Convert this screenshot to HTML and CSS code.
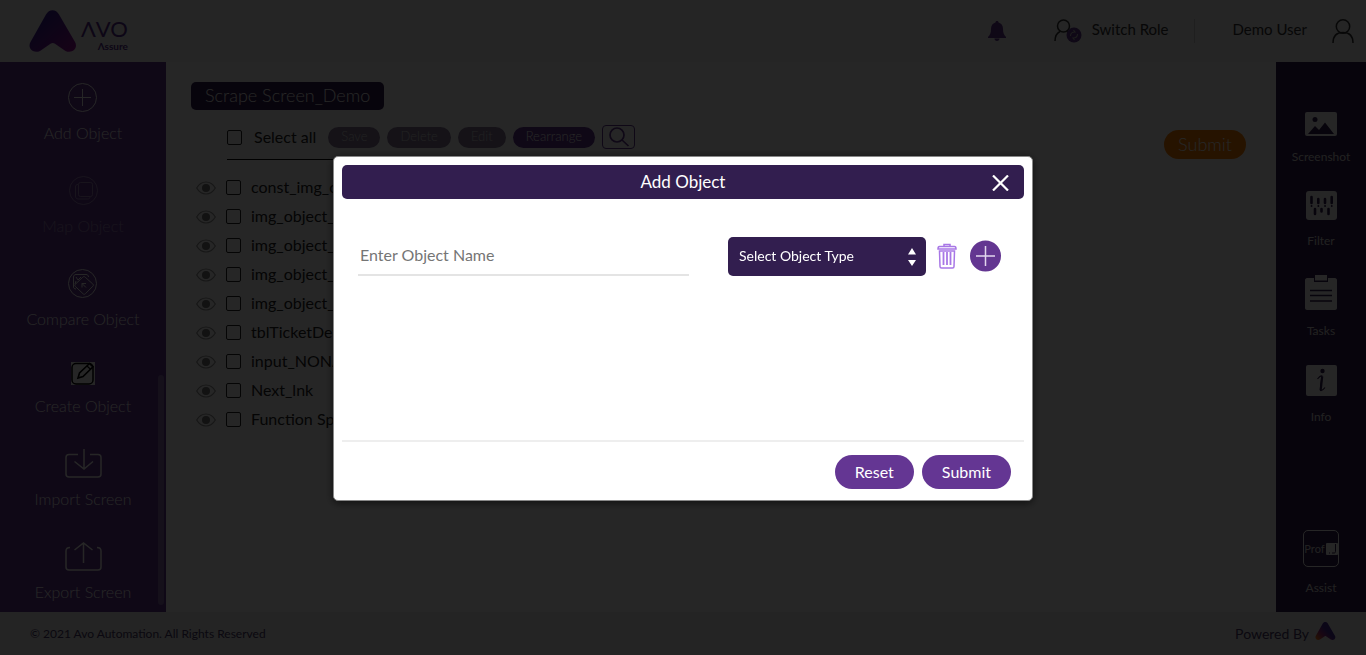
FILE: index.html
```html
<!DOCTYPE html>
<html lang="en">
<head>
  <meta charset="UTF-8">
  <meta name="viewport" content="width=device-width, initial-scale=1.0">
  <title>Avo Assure</title>
  <link rel="stylesheet" href="styles.css">
</head>
<body>
  <svg width="0" height="0" class="defs" aria-hidden="true">
    <defs>
      <linearGradient id="logoGrad" x1="0" y1="0" x2="1" y2="1">
        <stop offset="0.3" stop-color="#40209c"/>
        <stop offset="1" stop-color="#a0109c"/>
      </linearGradient>
      <linearGradient id="footGrad" x1="0" y1="1" x2="0.6" y2="0.5">
        <stop offset="0.1" stop-color="#ff7a18"/>
        <stop offset="0.6" stop-color="#a02880"/>
        <stop offset="1" stop-color="#4a2a9c"/>
      </linearGradient>
      <symbol id="eye" viewBox="0 0 20 14">
        <path d="M.7 7C3 3 6.300 1 10 1s7 2 9.300 6c-2.300 4-5.600 6-9.300 6S3 11 .7 7z" fill="none" stroke="#999" stroke-width="1.200"/>
        <circle cx="10" cy="7" r="4" fill="#777"/>
      </symbol>
    </defs>
  </svg>

  <div class="page">
    <header class="header">
      <a href="#" class="logo" aria-label="Avo Assure">
        <svg width="48" height="42" viewBox="0 0 48 42"><path d="M17 4.500C20 -1.300 27 -1.300 30 4.500L46 32c3.500 6.500-3 12-9.500 9L26 33.700c-1.500-1-3-1-4.500 0L11 41C4.500 44-2 38.500 1.500 32z" fill="url(#logoGrad)"/></svg>
        <span class="logo-text"><span class="logo-avo">ΛVO</span><span class="logo-sub">Λssure</span></span>
      </a>
      <div class="header-right">
        <button class="icon-btn bell" aria-label="Notifications">
          <svg width="18" height="20" viewBox="0 0 18 20"><path d="M9 0c1 0 1.500.6 1.500 1.500C13.500 2.300 15 4.700 15 8c0 4 1 6 3 8v1H0v-1c2-2 3-4 3-8 0-3.300 1.500-5.700 4.500-6.500C7.500.6 8 0 9 0zM6.500 17.500h5C11.500 19 10.400 20 9 20s-2.500-1-2.500-2.500z" fill="#633691"/></svg>
        </button>
        <button class="switch">
          <svg width="28" height="24" viewBox="0 0 28 24">
            <circle cx="9.500" cy="7" r="6" fill="none" stroke="#333" stroke-width="1.500"/>
            <path d="M1 22c0-5 2-8 5-9.500M13 12.300l2 1.500" fill="none" stroke="#333" stroke-width="1.500"/>
            <circle cx="20" cy="16" r="7.500" fill="#633691"/>
            <path d="M16.500 17c0-3 2-4 4.500-4l-1.500-2M23.500 15c0 3-2 4-4.500 4l1.500 2" fill="none" stroke="#bbb" stroke-width="1.100"/>
          </svg>
          <span>Switch Role</span>
        </button>
        <button class="user">
          <span>Demo User</span>
          <svg width="22" height="24" viewBox="0 0 22 24"><circle cx="11" cy="7.500" r="6.700" fill="none" stroke="#333" stroke-width="1.500"/><path d="M1 24c0-7 4-10.500 10-10.500S21 17 21 24" fill="none" stroke="#333" stroke-width="1.500"/></svg>
        </button>
      </div>
    </header>

    <div class="content">
      <nav class="sidebar">
        <button class="side-item">
          <svg width="29" height="29" viewBox="0 0 29 29" fill="none" stroke="#fff"><circle cx="14.500" cy="14.500" r="14"/><path d="M14.500 6v17M6 14.500h17"/></svg>
          Add Object
        </button>
        <button class="side-item" disabled>
          <svg width="29" height="29" viewBox="0 0 29 29" fill="none" stroke="#fff"><circle cx="14.500" cy="14.500" r="14"/><rect x="9.500" y="6.500" width="14" height="14" rx="2"/><path d="M9 8.500c-2 0-2.500 1-2.500 2.500v9c0 2 1 3 3 3h9c1.500 0 2.500-.5 2.500-2.500"/></svg>
          Map Object
        </button>
        <button class="side-item">
          <svg width="29" height="29" viewBox="0 0 29 29" fill="none" stroke="#fff"><circle cx="14.500" cy="14.500" r="14"/><path d="M8 20c-1.500 0-2.500-.7-2.500-2V8c0-1.500 1-2.500 2.500-2.500h10c1.500 0 2.500 1 2.500 2.500"/><path d="M14.800 8.200c.8-.8 1.600-.8 2.400 0l7.600 6.800c.8.800.8 1.500 0 2.300l-7.400 7.400c-.8.800-1.600.8-2.400 0l-7.600-7.200c-.8-.8-.8-1.500 0-2.300zM18 18.500l-4-4m0 4v-4h4M8 8l2 3 3-3M8 12l-1 3"/></svg>
          Compare Object
        </button>
        <button class="side-item">
          <svg width="24" height="23" viewBox="0 0 24 23"><path d="M0 0h24v23H0z" fill="#fff"/><rect x="1" y="1.500" width="21" height="20.500" rx="4" fill="none" stroke="#000" stroke-width="1.500"/><path d="M7 16l1.500-5L18.500 1.500l3.500 3.300L12 14.500z" fill="#fff" stroke="#000" stroke-width="1.600"/><path d="M16 4l3.500 3.300" stroke="#000" stroke-width="1.200"/></svg>
          Create Object
        </button>
        <button class="side-item">
          <svg width="37" height="29" viewBox="0 0 37 29" fill="none" stroke="#fff" stroke-width="1.500"><path d="M13 5.500H4c-2 0-3 1-3 3V25c0 2 1 3 3 3h29c2 0 3-1 3-3V8.500c0-2-1-3-3-3h-8M19 0v20M9.500 12.500L19 20l9-7.500"/></svg>
          Import Screen
        </button>
        <button class="side-item">
          <svg width="37" height="29" viewBox="0 0 37 29" fill="none" stroke="#fff" stroke-width="1.500"><path d="M5 5.500C2 5.500 1 7 1 9v16c0 2 1 3 3 3h29c2 0 3-1 3-3V9c0-2-1-3.500-4-3.500M18.500 21V1M9.500 8l9-7 9 7"/></svg>
          Export Screen
        </button>
        <div class="scroll-thumb"></div>
      </nav>

      <main class="main">
        <div class="scrape">
          <h1 class="screen-name">Scrape Screen_Demo</h1>
          <div class="toolbar">
            <input type="checkbox" id="selectAll">
            <label for="selectAll">Select all</label>
            <button class="pill" disabled>Save</button>
            <button class="pill" disabled>Delete</button>
            <button class="pill" disabled>Edit</button>
            <button class="pill">Rearrange</button>
            <button class="search-btn" aria-label="Search"><svg width="22" height="20" viewBox="0 0 22 20" fill="none" stroke="#633691" stroke-width="1.700"><circle cx="9" cy="8" r="7"/><path d="M14 13l6.500 6"/></svg></button>
          </div>
          <ul class="objects">
            <li><svg width="20" height="14"><use href="#eye"/></svg><input type="checkbox" id="o1"><label for="o1">const_img_object</label></li>
            <li><svg width="20" height="14"><use href="#eye"/></svg><input type="checkbox" id="o2"><label for="o2">img_object_img</label></li>
            <li><svg width="20" height="14"><use href="#eye"/></svg><input type="checkbox" id="o3"><label for="o3">img_object_img</label></li>
            <li><svg width="20" height="14"><use href="#eye"/></svg><input type="checkbox" id="o4"><label for="o4">img_object_img</label></li>
            <li><svg width="20" height="14"><use href="#eye"/></svg><input type="checkbox" id="o5"><label for="o5">img_object_img</label></li>
            <li><svg width="20" height="14"><use href="#eye"/></svg><input type="checkbox" id="o6"><label for="o6">tblTicketDetails</label></li>
            <li><svg width="20" height="14"><use href="#eye"/></svg><input type="checkbox" id="o7"><label for="o7">input_NONAME</label></li>
            <li><svg width="20" height="14"><use href="#eye"/></svg><input type="checkbox" id="o8"><label for="o8">Next_lnk</label></li>
            <li><svg width="20" height="14"><use href="#eye"/></svg><input type="checkbox" id="o9"><label for="o9">Function Specs</label></li>
          </ul>
        </div>
        <button class="submit-task">Submit</button>
      </main>

      <aside class="rightbar">
        <button class="right-item">
          <svg width="32" height="24" viewBox="0 0 32 24"><rect width="32" height="24" rx="2" fill="#fff"/><circle cx="10" cy="7.500" r="2.500" fill="#321e4f"/><path d="M3 22l7-8 4 4 6-7.500L29 22z" fill="#321e4f"/></svg>
          Screenshot
        </button>
        <button class="right-item">
          <svg width="31" height="29" viewBox="0 0 31 29"><rect width="31" height="29" rx="3" fill="#fff"/><g stroke="#321e4f" stroke-width="2.600" stroke-linecap="round"><path d="M5.500 6v6M12.300 8v4M19 8v4M25.700 6v6M9 18v5M15.500 18v2.500M22.500 18v5"/><path d="M5.500 15h.1M12.300 15h.1M19 15h.1M25.700 15h.1" stroke-width="1.800"/></g></svg>
          Filter
        </button>
        <button class="right-item">
          <svg width="32" height="35" viewBox="0 0 32 35"><path d="M2 3h7v4h14V3h7c1 0 2 1 2 2v28c0 1-1 2-2 2H2c-1 0-2-1-2-2V5c0-1 1-2 2-2z" fill="#fff"/><path d="M10 0h12v5.500H10z" fill="#fff"/><path d="M5 15.500h22M5 20.500h22M5 26h22" stroke="#321e4f" stroke-width="1.600"/></svg>
          Tasks
        </button>
        <button class="right-item">
          <svg width="31" height="31" viewBox="0 0 31 31"><rect width="31" height="31" rx="2" fill="#fff"/><circle cx="16.500" cy="6" r="2.200" fill="#321e4f"/><path d="M11.500 14c2-2.500 3.500-3.500 4.500-3-.3 4-2 11-1.500 14.500 1.500.5 3-1 4.500-3" fill="none" stroke="#321e4f" stroke-width="1.200"/><path d="M16.200 11.500l-1.500 13.500" stroke="#321e4f" stroke-width="2.200"/></svg>
          Info
        </button>
        <button class="right-item assist">
          <span class="prof">Prof<svg width="12" height="12" viewBox="0 0 12 12"><rect width="12" height="12" rx="1" fill="#fff"/><path d="M9.500 1v7.500c0 1-.5 1.500-1.500 1.500H6M3 10h1" fill="none" stroke="#321e4f" stroke-width="1"/></svg></span>
          Assist
        </button>
      </aside>
    </div>

    <footer class="footer">
      <span class="copyright">© 2021 Avo Automation. All Rights Reserved</span>
      <span class="powered">Powered By
        <svg width="21" height="18" viewBox="0 0 48 42"><path d="M17 4.500C20 -1.300 27 -1.300 30 4.500L46 32c3.500 6.500-3 12-9.500 9L26 33.700c-1.500-1-3-1-4.500 0L11 41C4.500 44-2 38.500 1.500 32z" fill="url(#footGrad)"/></svg>
      </span>
    </footer>
  </div>

  <div class="overlay">
    <div class="modal" role="dialog" aria-labelledby="modalTitle">
      <div class="modal-header">
        <h2 id="modalTitle">Add Object</h2>
        <button class="close" aria-label="Close"><svg width="17" height="16" viewBox="0 0 17 16"><path d="M1 .5l15 15M16 .5l-15 15" stroke="#fff" stroke-width="2.200"/></svg></button>
      </div>
      <div class="modal-body">
        <input type="text" class="object-name" placeholder="Enter Object Name" aria-label="Object name">
        <div class="select-wrap">
          <select aria-label="Object type">
            <option>Select Object Type</option>
          </select>
          <svg width="8" height="18" viewBox="0 0 8 18"><path d="M4 0l4 6.500H0zM4 18l4-6H0z" fill="#fff"/></svg>
        </div>
        <button class="icon-btn trash" aria-label="Delete"><svg width="20" height="26" viewBox="0 0 20 26" fill="none" stroke="#a877e6" stroke-width="1.500"><path d="M7 3V1.500h6V3M2.500 3.500h15c1 0 1.500.7 1.500 2.500H1c0-1.800.5-2.500 1.500-2.500zM2.500 8l.5 15.500c0 1 .5 1.500 1.500 1.500h11c1 0 1.500-.5 1.500-1.500L17.500 8z"/><path d="M6.500 9v13M10 9v13M13.500 9v13" stroke-width="1.800"/></svg></button>
        <button class="icon-btn" aria-label="Add row"><svg width="31" height="32" viewBox="0 0 31 32"><circle cx="15.500" cy="16" r="15.500" fill="#633691"/><path d="M15.500 6v20M6 16h19" stroke="#e2d6ee" stroke-width="1.500"/></svg></button>
      </div>
      <div class="modal-footer">
        <button class="btn">Reset</button>
        <button class="btn">Submit</button>
      </div>
    </div>
  </div>
</body>
</html>
```
FILE: styles.css
```css
* {
  box-sizing: border-box;
}
body {
  margin: 0;
  font-family: Lato, "Liberation Sans", sans-serif;
  font-size: 16px;
  line-height: 20px;
  color: #222;
  background-color: #fff;
}
button {
  font-family: inherit;
  border: none;
  background: none;
  padding: 0;
  cursor: pointer;
}
svg {
  display: block;
  flex: none;
}
.defs {
  position: absolute;
}
.page {
  height: 100vh;
  display: flex;
  flex-direction: column;
}

/* header */
.header {
  height: 62px;
  background-color: #f4f4f4;
  padding: 0 12px 0 29px;
  display: flex;
  align-items: center;
  justify-content: space-between;
}
.logo {
  display: flex;
  align-items: flex-end;
  gap: 4px;
  color: #5b2d91;
  text-decoration: none;
}
.logo-text {
  display: flex;
  flex-direction: column;
  align-items: flex-end;
}
.logo-avo {
  font-size: 22px;
  line-height: 22px;
}
.logo-sub {
  font-size: 10px;
  line-height: 12px;
  font-weight: 700;
}
.header-right {
  display: flex;
  align-items: center;
}
.switch, .user {
  display: flex;
  align-items: center;
  height: 24px;
  font-size: 15px;
  line-height: 20px;
  color: #333;
}
.switch span, .user span {
  padding-bottom: 4px;
}
.switch {
  gap: 10px;
  margin-left: 48px;
  padding-right: 25px;
  border-right: 1px solid #ccc;
}
.user {
  gap: 25px;
  padding-left: 38px;
}

.content {
  flex: 1;
  display: flex;
  min-height: 0;
}

/* left sidebar */
.sidebar {
  position: relative;
  width: 166px;
  background-color: #643693;
  padding-top: 21px;
  display: flex;
  flex-direction: column;
  align-items: center;
  gap: 33px;
}
.side-item {
  display: flex;
  flex-direction: column;
  align-items: center;
  gap: 11px;
  font-size: 16px;
  line-height: 20px;
  font-weight: 300;
  color: #fff;
}
.side-item:disabled {
  opacity: 0.4;
}
.scroll-thumb {
  position: absolute;
  right: 2px;
  bottom: 7px;
  width: 6px;
  height: 230px;
  border-radius: 3px;
  background-color: #8a6aae;
}

/* scrape area */
.main {
  flex: 1;
  display: flex;
  justify-content: space-between;
  align-items: flex-start;
  padding: 20px 30px 0 25px;
}
.scrape {
  width: 650px;
}
.screen-name {
  width: fit-content;
  margin: 0;
  padding: 0 14px 2px;
  font-size: 18px;
  line-height: 26px;
  font-weight: 300;
  color: #fff;
  background-color: #321e4f;
  border-radius: 5px;
}
.toolbar {
  display: flex;
  align-items: center;
  gap: 7px;
  margin-left: 36px;
  padding: 15px 0 10px;
  border-bottom: 1px solid #000;
}
.toolbar label {
  margin: 0 5px;
}
input[type="checkbox"] {
  appearance: none;
  width: 15px;
  height: 15px;
  margin: 0;
  border: 1px solid #222;
  border-radius: 2px;
  flex: none;
}
.pill {
  height: 21px;
  padding: 0 13px 2px;
  border-radius: 11px;
  font-size: 13px;
  font-weight: 300;
  color: #fff;
  background-color: #643693;
}
.pill:disabled {
  color: #ddd;
  background-color: #8a7a9c;
}
.search-btn {
  display: flex;
  align-items: center;
  justify-content: center;
  width: 33px;
  height: 24px;
  border: 1px solid #633691;
  border-radius: 4px;
}
.objects {
  list-style: none;
  margin: 13px 0 0;
  padding: 0 0 0 5px;
}
.objects li {
  display: flex;
  align-items: center;
  gap: 10px;
  height: 29px;
}
.objects label {
  padding-bottom: 2px;
}
.submit-task {
  height: 29px;
  margin-top: 48px;
  padding: 0 14px 2px;
  border-radius: 15px;
  font-size: 18px;
  font-weight: 300;
  color: #fff;
  background-color: #ff8000;
}

/* right sidebar */
.rightbar {
  width: 90px;
  background-color: #321e4f;
  padding: 50px 0 16px;
  display: flex;
  flex-direction: column;
  align-items: center;
  gap: 26px;
}
.right-item {
  display: flex;
  flex-direction: column;
  align-items: center;
  gap: 13px;
  font-size: 12px;
  line-height: 16px;
  color: #ddd;
}
.assist {
  margin-top: auto;
}
.prof {
  display: flex;
  align-items: center;
  justify-content: center;
  gap: 1px;
  width: 36px;
  height: 37px;
  border: 1px solid #fff;
  border-radius: 5px;
  font-size: 11px;
}

/* footer */
.footer {
  height: 43px;
  padding: 0 30px;
  background-color: #efefef;
  display: flex;
  align-items: center;
  justify-content: space-between;
  color: #4a3a6a;
}
.copyright {
  font-size: 12px;
}
.powered {
  display: flex;
  align-items: center;
  gap: 6px;
  font-size: 14px;
}
.powered svg {
  margin-bottom: 6px;
}

/* add object popup */
.overlay {
  position: fixed;
  inset: 0;
  padding-top: 156px;
  background-color: rgba(0, 0, 0, 0.85);
  display: flex;
  justify-content: center;
  align-items: flex-start;
}
.modal {
  width: 700px;
  max-width: 100%;
  padding: 8px;
  background-color: #fff;
  border: 1px solid #888;
  border-radius: 5px;
  box-shadow: 0 2px 8px rgba(0, 0, 0, 0.6);
}
.modal-header {
  position: relative;
  background-color: #321e4f;
  border-radius: 5px;
  color: #fff;
}
.modal-header h2 {
  margin: 0;
  text-align: center;
  font-size: 17px;
  line-height: 34px;
  font-weight: 400;
}
.close {
  position: absolute;
  top: 10px;
  right: 15px;
}
.modal-body {
  display: flex;
  align-items: flex-start;
  height: 241px;
  padding: 38px 23px 0 16px;
}
.object-name {
  flex: 1;
  height: 39px;
  margin-right: 39px;
  padding: 0 2px 2px;
  border: none;
  border-bottom: 2px solid #e4e4e4;
  font-family: inherit;
  font-size: 16px;
  color: #333;
  outline: none;
}
.object-name::placeholder {
  color: #757575;
}
.select-wrap {
  position: relative;
  width: 198px;
}
.select-wrap select {
  appearance: none;
  display: block;
  width: 100%;
  height: 39px;
  padding: 0 11px 3px;
  border: none;
  border-radius: 5px;
  background-color: #321e4f;
  color: #fff;
  font-family: inherit;
  font-size: 14px;
}
.select-wrap svg {
  position: absolute;
  top: 11px;
  right: 10px;
  pointer-events: none;
}
.icon-btn {
  display: flex;
  align-items: center;
}
.modal-body .icon-btn {
  height: 38px;
}
.modal-body .trash {
  margin: 0 13px 0 11px;
}
.modal-footer {
  display: flex;
  justify-content: flex-end;
  gap: 8px;
  padding: 13px 13px 3px;
  border-top: 2px solid #eee;
}
.btn {
  height: 34px;
  padding: 0 20px 2px;
  border-radius: 17px;
  background-color: #643693;
  color: #fff;
  font-size: 16px;
}
```
